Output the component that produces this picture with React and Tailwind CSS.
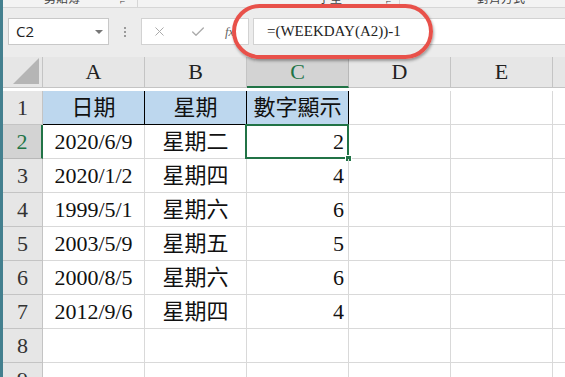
import React from "react";
import { X, Check } from "lucide-react";

const serif = { fontFamily: '"Liberation Serif", "Noto Sans CJK TC", serif' };

const rows = [
    ["2020/6/9", "星期二", "2"],
    ["2020/1/2", "星期四", "4"],
    ["1999/5/1", "星期六", "6"],
    ["2003/5/9", "星期五", "5"],
    ["2000/8/5", "星期六", "6"],
    ["2012/9/6", "星期四", "4"],
];

const cols = ["A", "B", "C", "D", "E"];

const App = () => {
    return (
        <div className="relative w-[565px] h-[377px] overflow-hidden bg-white flex">
            {/* window edge */}
            <div className="w-[3px] shrink-0 bg-[#44808f]" />

            <div className="flex-1 flex flex-col min-w-0">
                {/* ribbon bottom, mostly cut off */}
                <div
                    className="h-[8px] shrink-0 overflow-hidden bg-[#f3f3f3] border-b border-[#d6d6d6] flex text-[12px] text-[#444] leading-none"
                    style={{ fontFamily: '"Noto Sans CJK TC", sans-serif' }}
                >
                    <div className="w-[135px] shrink-0 border-r border-[#d6d6d6] flex -mt-[8px]">
                        <span className="ml-[41px]">剪貼簿</span>
                        <span className="ml-[40px] text-[9px] mt-[4px]">⌐</span>
                    </div>
                    <div className="w-[262px] shrink-0 border-r border-[#d6d6d6] flex -mt-[8px]">
                        <span className="ml-[180px]">字型</span>
                        <span className="ml-[44px] text-[9px] mt-[4px]">⌐</span>
                    </div>
                    <div className="flex-1 flex -mt-[8px]">
                        <span className="ml-[77px]">對齊方式</span>
                    </div>
                </div>

                {/* formula bar */}
                <div className="h-[49px] shrink-0 bg-[#ececec] flex items-start pt-[10px] pl-[5px]">
                    <div
                        className="w-[101px] h-[27px] bg-white border border-[#c8c8c8] flex items-center justify-between pl-[7px] pr-[5px] text-[15px] text-[#222]"
                        style={{ fontFamily: '"Open Sans", "Liberation Sans", sans-serif' }}
                    >
                        <span>C2</span>
                        <span className="w-0 h-0 border-l-[4px] border-r-[4px] border-t-[4px] border-l-transparent border-r-transparent border-t-[#777]" />
                    </div>
                    <div className="w-[32px] h-[27px] flex flex-col items-center justify-center gap-[2px]">
                        <span className="w-[2px] h-[2px] bg-[#9a9a9a]" />
                        <span className="w-[2px] h-[2px] bg-[#9a9a9a]" />
                        <span className="w-[2px] h-[2px] bg-[#9a9a9a]" />
                    </div>
                    <div className="w-[108px] h-[27px] bg-white border border-[#d2d2d2] flex items-center text-[#ababab]">
                        <X size={15} strokeWidth={1.6} className="ml-[10px]" />
                        <Check size={16} strokeWidth={2} className="ml-[23px]" />
                        <span className="ml-[19px] italic text-[13px] text-[#666]" style={serif}>
                            fx
                        </span>
                    </div>
                    <div
                        className="ml-[4px] flex-1 h-[27px] bg-white border-l border-y border-[#d2d2d2] flex items-center pl-[13px] text-[15px] text-[#222]"
                        style={serif}
                    >
                        =(WEEKDAY(A2))-1
                    </div>
                </div>

                {/* sheet grid */}
                <div
                    className="grid grid-cols-[40px_102px_102px_102px_102px_102px_1fr] auto-rows-[34px] text-[22px] text-[#111] leading-none"
                    style={serif}
                >
                    {/* column headers */}
                    <div className="h-[31px] bg-[#e6e6e6] border-r border-b border-[#c4c4c4] relative">
                        <span className="absolute right-[3px] bottom-[3px] w-0 h-0 border-l-[26px] border-t-[26px] border-l-transparent border-t-transparent border-b-0 border-r-0"
                            style={{ borderBottom: "0", borderRight: "0" }}
                        />
                        <svg className="absolute right-[3px] bottom-[3px]" width="26" height="26">
                            <polygon points="26,0 26,26 0,26" fill="#b5b5b5" />
                        </svg>
                    </div>
                    {cols.map((c) => (
                        <div
                            key={c}
                            className={
                                c === "C"
                                    ? "h-[31px] bg-[#d3d3d3] border-r border-[#b8b8b8] border-b-2 border-b-[#217346] text-[#217346] flex items-center justify-center"
                                    : "h-[31px] bg-[#e6e6e6] border-r border-b border-[#c4c4c4] text-[#222] flex items-center justify-center"
                            }
                        >
                            {c}
                        </div>
                    ))}
                    <div className="h-[31px] bg-[#e6e6e6] border-b border-[#c4c4c4]" />

                    {/* row 1 */}
                    <div className="bg-[#e6e6e6] border-r border-b border-[#c4c4c4] text-[#333] flex items-center justify-center">
                        1
                    </div>
                    <div className="bg-[#bdd7ee] border-r border-b border-black flex items-center justify-center">
                        日期
                    </div>
                    <div className="bg-[#bdd7ee] border-r border-b border-black flex items-center justify-center">
                        星期
                    </div>
                    <div className="bg-[#bdd7ee] border-r border-b border-black flex items-center justify-center">
                        數字顯示
                    </div>
                    <div className="border-r border-b border-[#d9d9d9]" />
                    <div className="border-r border-b border-[#d9d9d9]" />
                    <div className="border-b border-[#d9d9d9]" />

                    {/* data rows */}
                    {rows.map((r, i) => {
                        const n = i + 2;
                        const sel = n === 2;
                        return (
                            <React.Fragment key={n}>
                                <div
                                    className={
                                        sel
                                            ? "bg-[#d3d3d3] border-r-2 border-r-[#217346] border-b border-b-[#b8b8b8] text-[#217346] flex items-center justify-center"
                                            : "bg-[#e6e6e6] border-r border-b border-[#c4c4c4] text-[#333] flex items-center justify-center"
                                    }
                                >
                                    {n}
                                </div>
                                <div className="border-r border-b border-[#d9d9d9] flex items-center justify-center">
                                    {r[0]}
                                </div>
                                <div className="border-r border-b border-[#d9d9d9] flex items-center justify-center">
                                    {r[1]}
                                </div>
                                <div className="relative border-r border-b border-[#d9d9d9] flex items-center justify-end pr-[4px]">
                                    {r[2]}
                                    {sel && (
                                        <>
                                            <span className="absolute -left-[2px] -top-[1px] -right-[1px] -bottom-[1px] border-2 border-[#217346]" />
                                            <span className="absolute -right-[4px] -bottom-[4px] w-[7px] h-[7px] bg-[#217346] border border-white" />
                                        </>
                                    )}
                                </div>
                                <div className="border-r border-b border-[#d9d9d9]" />
                                <div className="border-r border-b border-[#d9d9d9]" />
                                <div className="border-b border-[#d9d9d9]" />
                            </React.Fragment>
                        );
                    })}

                    {/* empty rows */}
                    {[8, 9].map((n) => (
                        <React.Fragment key={n}>
                            <div className="bg-[#e6e6e6] border-r border-b border-[#c4c4c4] text-[#333] flex items-center justify-center">
                                {n}
                            </div>
                            <div className="border-r border-b border-[#d9d9d9]" />
                            <div className="border-r border-b border-[#d9d9d9]" />
                            <div className="border-r border-b border-[#d9d9d9]" />
                            <div className="border-r border-b border-[#d9d9d9]" />
                            <div className="border-r border-b border-[#d9d9d9]" />
                            <div className="border-b border-[#d9d9d9]" />
                        </React.Fragment>
                    ))}
                </div>
            </div>

            {/* red highlight around the formula */}
            <div className="absolute left-[232px] top-[4px] w-[201px] h-[55px] border-[4px] border-[#e8514a] rounded-[28px] shadow-[1px_2px_3px_rgba(0,0,0,0.35)] pointer-events-none" />
        </div>
    );
};

export default App;
